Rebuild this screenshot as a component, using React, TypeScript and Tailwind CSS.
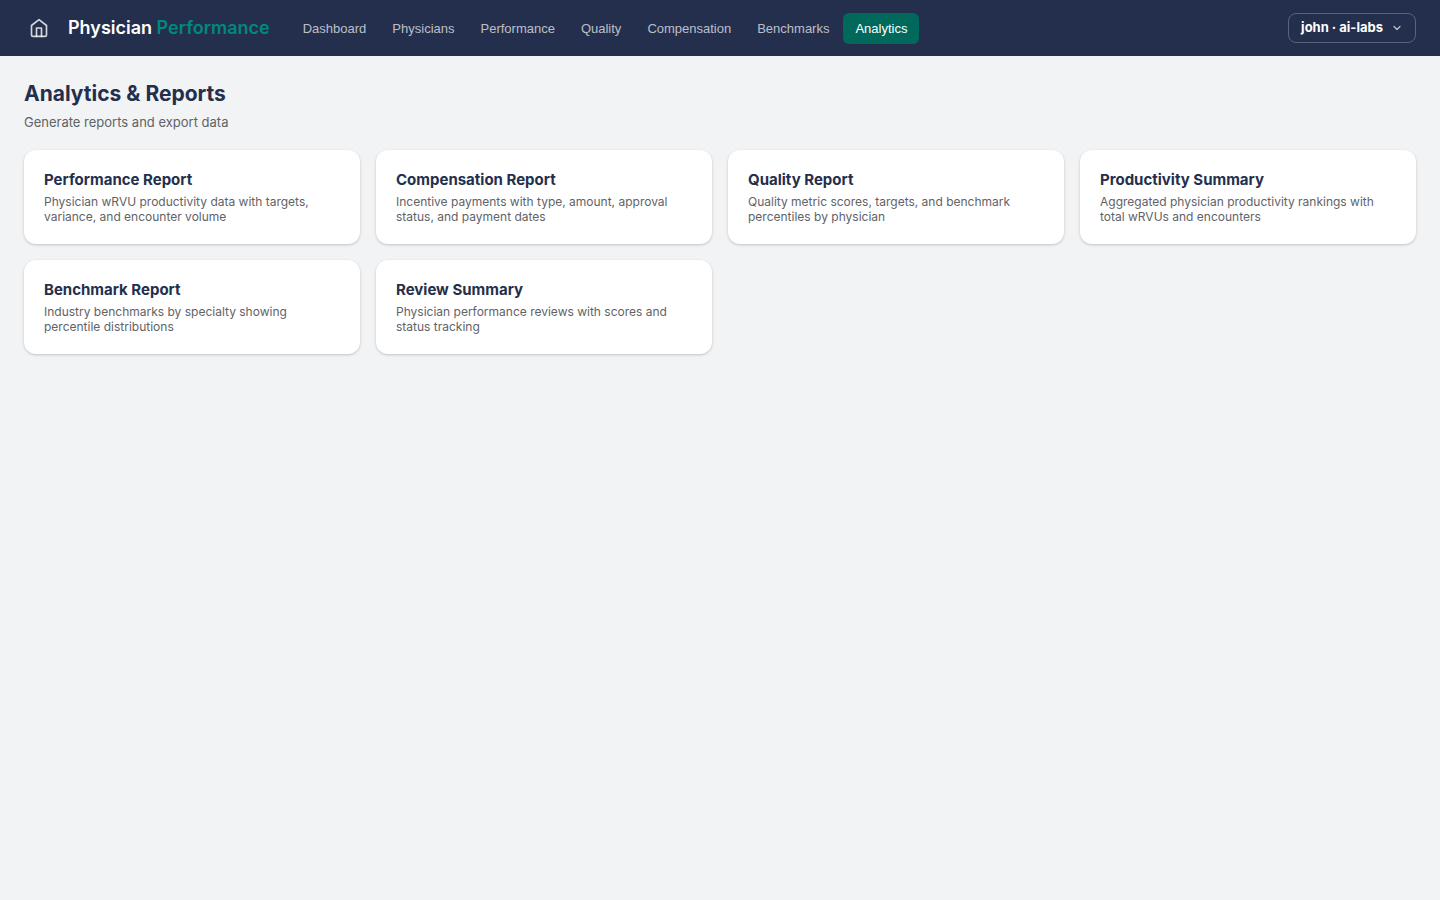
const navItems = [
  'Dashboard',
  'Physicians',
  'Performance',
  'Quality',
  'Compensation',
  'Benchmarks',
  'Analytics',
];

const reports = [
  {
    title: 'Performance Report',
    description: 'Physician wRVU productivity data with targets, variance, and encounter volume',
  },
  {
    title: 'Compensation Report',
    description: 'Incentive payments with type, amount, approval status, and payment dates',
  },
  {
    title: 'Quality Report',
    description: 'Quality metric scores, targets, and benchmark percentiles by physician',
  },
  {
    title: 'Productivity Summary',
    description: 'Aggregated physician productivity rankings with total wRVUs and encounters',
  },
  {
    title: 'Benchmark Report',
    description: 'Industry benchmarks by specialty showing percentile distributions',
  },
  {
    title: 'Review Summary',
    description: 'Physician performance reviews with scores and status tracking',
  },
];

function HomeIcon() {
  return (
    <svg
      className="size-5"
      viewBox="0 0 24 24"
      fill="none"
      stroke="currentColor"
      strokeWidth="2"
      strokeLinecap="round"
      strokeLinejoin="round"
      aria-hidden="true"
    >
      <path d="M3 9l9-7 9 7v11a2 2 0 0 1-2 2H5a2 2 0 0 1-2-2z" />
      <path d="M9 22V12h6v10" />
    </svg>
  );
}

function ChevronIcon() {
  return (
    <svg
      className="size-3 opacity-70"
      viewBox="0 0 24 24"
      fill="none"
      stroke="currentColor"
      strokeWidth="2.5"
      strokeLinecap="round"
      strokeLinejoin="round"
      aria-hidden="true"
    >
      <path d="M6 9l6 6 6-6" />
    </svg>
  );
}

function TopBar() {
  return (
    <header className="flex h-14 items-center bg-[#242f4d] px-6 text-white">
      <a href="#home" aria-label="Home" className="flex size-[30px] items-center justify-center text-white/80">
        <HomeIcon />
      </a>
      <span className="ml-3.5 text-lg font-semibold whitespace-nowrap">
        Physician <span className="text-[#00897b]">Performance</span>
      </span>
      <nav className="ml-[21px] flex gap-0.5 font-['Liberation_Sans',Arial,sans-serif]">
        {navItems.map((item) => (
          <button
            key={item}
            type="button"
            aria-current={item === 'Analytics' ? 'page' : undefined}
            className={
              item === 'Analytics'
                ? 'rounded-md bg-[#00695c] px-3 py-2 text-[13px] leading-[15px] text-white'
                : 'rounded-md px-3 py-2 text-[13px] leading-[15px] text-white/70'
            }
          >
            {item}
          </button>
        ))}
      </nav>
      <button
        type="button"
        aria-haspopup="menu"
        className="ml-auto flex h-[30px] items-center gap-2 rounded-lg border border-white/25 px-3 text-[13px] font-bold whitespace-nowrap"
      >
        john · ai-labs
        <ChevronIcon />
      </button>
    </header>
  );
}

export default function App() {
  return (
    <div className="min-h-screen bg-[#f1f3f4] font-[Inter,sans-serif] text-[#242f4d]">
      <TopBar />
      <main className="p-6">
        <h1 className="text-[21px] leading-7 font-bold">Analytics &amp; Reports</h1>
        <p className="mt-1.5 text-[13px] leading-4 text-[#5f6368]">Generate reports and export data</p>
        <div className="mt-5 grid grid-cols-4 gap-4">
          {reports.map(({ title, description }) => (
            <button
              key={title}
              type="button"
              className="flex flex-col gap-1 rounded-xl bg-white p-5 text-left shadow-[0_1px_3px_rgba(0,0,0,0.2)]"
            >
              <span className="text-[15px] leading-5 font-bold">{title}</span>
              <span className="text-xs leading-[15px] text-[#5f6368]">{description}</span>
            </button>
          ))}
        </div>
      </main>
    </div>
  );
}
